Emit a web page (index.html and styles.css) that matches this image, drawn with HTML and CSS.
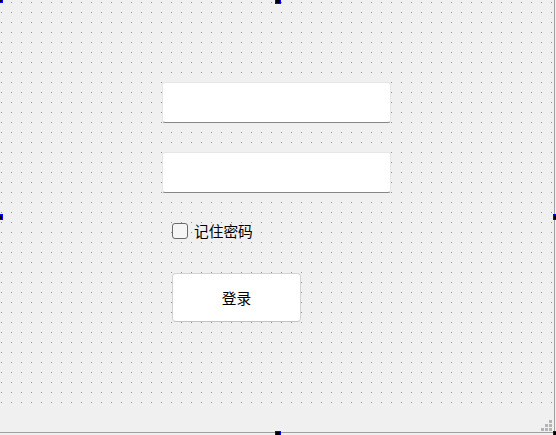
FILE: index.html
```html
<!DOCTYPE html>
<html lang="zh">
<head>
<meta charset="utf-8">
<title>Form</title>
<link rel="stylesheet" href="styles.css">
</head>
<body>
<div class="form">
  <div class="canvas">
    <div class="column">
      <div class="line-edit"></div>
      <div class="line-edit second"></div>
      <label class="check-row"><span class="check-box"></span><span class="check-label">记住密码</span></label>
      <div class="push-button">登录</div>
    </div>
  </div>
  <div class="status-bar">
    <div class="grip">
      <span class="g g3"></span>
      <span class="g g2"></span><span class="g g3"></span>
      <span class="g g1"></span><span class="g g2"></span><span class="g g3"></span>
    </div>
  </div>
  <span class="handle h-tl"></span>
  <span class="handle h-tm"></span>
  <span class="handle h-lm"></span>
  <span class="handle h-rm"></span>
  <span class="handle h-bm"></span>
  <span class="handle h-br"></span>
</div>
</body>
</html>
```
FILE: styles.css
```css
html, body {
  margin: 0;
  padding: 0;
  background: #f0f0f0;
  width: 556px;
  height: 435px;
  overflow: hidden;
  font-family: "Noto Sans CJK SC", "Noto Sans", sans-serif;
}

.form {
  position: relative;
  width: 554px;
  height: 432px;
  border-right: 1px solid #a0a0a0;
  border-bottom: 1px solid #a0a0a0;
  display: flex;
  flex-direction: column;
}

.canvas {
  height: 406px;
  background-color: #f0f0f0;
  background-image:
    linear-gradient(to bottom, #f0f0f0 0 2px, transparent 2px 3px, #f0f0f0 3px),
    linear-gradient(to right, #f0f0f0 0 1px, #8e8e8e 1px 2px, #f0f0f0 2px);
  background-size: 10px 10px, 10px 10px;
}

.column {
  display: flex;
  flex-direction: column;
  align-items: flex-start;
  padding: 82px 0 0 162px;
}

.line-edit {
  box-sizing: border-box;
  width: 229px;
  height: 41px;
  background: #ffffff;
  border: 1px solid #e6e6e6;
  border-bottom: 1px solid #868686;
  border-radius: 3px;
}

.line-edit.second {
  margin-top: 29px;
}

.check-row {
  display: flex;
  align-items: center;
  gap: 6px;
  margin: 30px 0 0 10px;
  height: 16px;
}

.check-box {
  box-sizing: border-box;
  width: 16px;
  height: 16px;
  border: 1px solid #6a6a6a;
  border-radius: 3px;
  background: #f5f5f5;
}

.check-label {
  font-size: 14.7px;
  line-height: 16px;
  color: #000;
}

.push-button {
  box-sizing: border-box;
  margin: 34px 0 0 10px;
  width: 129px;
  height: 49px;
  background: #ffffff;
  border: 1px solid #d3d3d3;
  border-bottom-color: #c2c2c2;
  border-radius: 4px;
  display: flex;
  align-items: center;
  justify-content: center;
  font-size: 14.7px;
  color: #000;
}

.status-bar {
  flex: 1;
  background: #f0f0f0;
  position: relative;
  display: flex;
  justify-content: flex-end;
  align-items: flex-end;
}

.grip {
  display: grid;
  grid-template-columns: repeat(3, 3px);
  grid-template-rows: repeat(3, 3px);
  gap: 1px;
  margin: 0 2px 1px 0;
}

.g {
  width: 3px;
  height: 3px;
  background: #b4b4b4;
}
.g1 { grid-column: 1; }
.g2 { grid-column: 2; }
.g3 { grid-column: 3; }

.handle {
  position: absolute;
  box-sizing: border-box;
  width: 6px;
  height: 6px;
  background: #000;
  border: 1px solid #0000ff;
}
.h-tl { left: -3px; top: -3px; }
.h-tm { left: 275px; top: -2px; }
.h-lm { left: -3px; top: 214px; }
.h-rm { left: 553px; top: 214px; }
.h-bm { left: 275px; top: 431px; }
.h-br { left: 553px; top: 431px; }
```
